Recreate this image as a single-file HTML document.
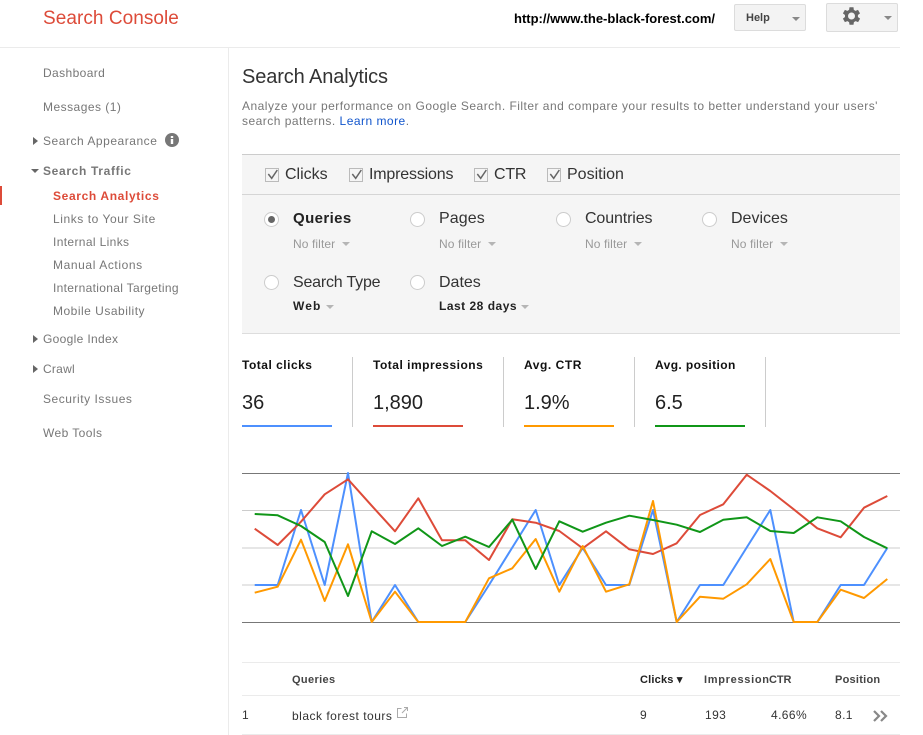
<!DOCTYPE html>
<html><head><meta charset="utf-8"><style>
html,body{margin:0;padding:0;background:#fff;}
body{width:923px;height:735px;overflow:hidden;position:relative;font-family:"Liberation Sans",sans-serif;}
.a{position:absolute;white-space:nowrap;}
.n{font-size:12px;letter-spacing:.5px;color:#777;line-height:14px;}
.f{font-size:16px;color:#333;line-height:18px;}
.s{font-size:12px;color:#999;line-height:14px;}
.w{font-size:12px;font-weight:bold;letter-spacing:.55px;color:#222;line-height:14px;}
.v{font-size:20px;color:#222;line-height:22px;}
.r{position:absolute;width:13px;height:13px;border:1px solid #ccc;border-radius:50%;background:#fff;}
.c{position:absolute;width:12px;height:12px;border:1px solid #bbb;background:#f5f5f5;}
.d{font-size:12px;letter-spacing:.4px;color:#333;line-height:14px;}
.h{font-size:11px;font-weight:bold;letter-spacing:.35px;color:#444;line-height:14px;}
.b{position:absolute;box-sizing:border-box;border:1px solid #dcdcdc;border-radius:2px;background:#f3f3f3;}
</style></head><body>
<div class="a" style="left:43px;top:8px;font-size:19px;letter-spacing:.05px;line-height:22px;color:#dd4b39;">Search Console</div>
<div class="a" style="left:514px;top:12px;font-size:13px;font-weight:bold;color:#000;line-height:14px;">http://www.the-black-forest.com/</div>
<div class="b" style="left:734px;top:4px;width:72px;height:27px;"></div>
<div class="a" style="left:746px;top:11px;font-size:11px;font-weight:bold;color:#444;line-height:14px;">Help</div>
<svg class="a" style="left:792px;top:17px" width="8" height="4"><path d="M0 0h8L4 4z" fill="#888"/></svg>
<div class="b" style="left:826px;top:3px;width:72px;height:29px;"></div>
<svg class="a" style="left:839px;top:4px" width="24" height="24" viewBox="0.500 0 24 24"><path fill="#666" d="M19.4 13a7.5 7.5 0 0 0 0-2l2.1-1.6-2-3.5-2.500 1a7.500 7.500 0 0 0-1.700-1L15 3.200h-4l-.4 2.700a7.500 7.500 0 0 0-1.700 1l-2.500-1-2 3.500L6.500 11a7.500 7.500 0 0 0 0 2l-2.100 1.600 2 3.500 2.500-1a7.500 7.500 0 0 0 1.700 1l.4 2.700h4l.4-2.700a7.500 7.500 0 0 0 1.700-1l2.500 1 2-3.500zM13 15.500a3.500 3.500 0 1 1 0-7 3.500 3.500 0 0 1 0 7z"/></svg>
<svg class="a" style="left:884px;top:16px" width="8" height="4"><path d="M0 0h8L4 4z" fill="#888"/></svg>
<div class="a" style="left:0;top:47px;width:900px;height:1px;background:#ebebeb;"></div>
<div class="a" style="left:228px;top:48px;width:1px;height:687px;background:#ebebeb;"></div>

<div class="a n" style="left:43px;top:66px;letter-spacing:.39px;">Dashboard</div>
<div class="a n" style="left:43px;top:100px;letter-spacing:.47px;">Messages (1)</div>
<svg class="a" style="left:33px;top:137px" width="5" height="8"><path d="M0 0l5 4-5 4z" fill="#666"/></svg>
<div class="a n" style="left:43px;top:134px;letter-spacing:.53px;">Search Appearance</div>
<svg class="a" style="left:165px;top:133px" width="14" height="14"><circle cx="7" cy="7" r="7" fill="#777"/><rect x="5.800" y="6" width="2.400" height="5" fill="#fff"/><rect x="5.800" y="3" width="2.400" height="2" fill="#fff"/></svg>
<svg class="a" style="left:31px;top:169px" width="8" height="5"><path d="M0 0h8L4 4z" fill="#666"/></svg>
<div class="a n" style="left:43px;top:164px;font-weight:bold;letter-spacing:.66px;">Search Traffic</div>
<div class="a" style="left:0;top:186px;width:2px;height:19px;background:#dd4b39;"></div>
<div class="a n" style="left:53px;top:189px;font-weight:bold;color:#dd4b39;letter-spacing:.64px;">Search Analytics</div>
<div class="a n" style="left:53px;top:212px;letter-spacing:.56px;">Links to Your Site</div>
<div class="a n" style="left:53px;top:235px;letter-spacing:.36px;">Internal Links</div>
<div class="a n" style="left:53px;top:258px;letter-spacing:.6px;">Manual Actions</div>
<div class="a n" style="left:53px;top:281px;letter-spacing:.32px;">International Targeting</div>
<div class="a n" style="left:53px;top:304px;letter-spacing:.5px;">Mobile Usability</div>
<svg class="a" style="left:33px;top:335px" width="5" height="8"><path d="M0 0l5 4-5 4z" fill="#666"/></svg>
<div class="a n" style="left:43px;top:332px;letter-spacing:.33px;">Google Index</div>
<svg class="a" style="left:33px;top:365px" width="5" height="8"><path d="M0 0l5 4-5 4z" fill="#666"/></svg>
<div class="a n" style="left:43px;top:362px;letter-spacing:.26px;">Crawl</div>
<div class="a n" style="left:43px;top:392px;letter-spacing:.54px;">Security Issues</div>
<div class="a n" style="left:43px;top:426px;letter-spacing:.42px;">Web Tools</div>

<div class="a" style="left:242px;top:65px;font-size:20px;letter-spacing:-.12px;line-height:24px;color:#333;">Search Analytics</div>
<div class="a" style="left:242px;top:99px;font-size:12px;letter-spacing:.48px;line-height:15px;color:#777;">Analyze your performance on Google Search. Filter and compare your results to better understand your users'<br>search patterns. <span style="color:#15c">Learn more</span>.</div>

<div class="a" style="left:242px;top:154px;width:658px;height:180px;box-sizing:border-box;background:#f5f5f5;border-top:1px solid #ccc;border-bottom:1px solid #ddd;"></div>
<div class="a" style="left:242px;top:194px;width:658px;height:1px;background:#d5d5d5;"></div>
<div class="c" style="left:265px;top:168px;"></div><svg class="a" style="left:265px;top:168px" width="14" height="14"><path d="M3.300 6l3.400 4.300L12.300 2" fill="none" stroke="#666" stroke-width="1.500"/></svg>
<div class="a f" style="left:285px;top:166px;">Clicks</div>
<div class="c" style="left:349px;top:168px;"></div><svg class="a" style="left:349px;top:168px" width="14" height="14"><path d="M3.300 6l3.400 4.300L12.300 2" fill="none" stroke="#666" stroke-width="1.500"/></svg>
<div class="a f" style="left:369px;top:166px;letter-spacing:-.18px;">Impressions</div>
<div class="c" style="left:474px;top:168px;"></div><svg class="a" style="left:474px;top:168px" width="14" height="14"><path d="M3.300 6l3.400 4.300L12.300 2" fill="none" stroke="#666" stroke-width="1.500"/></svg>
<div class="a f" style="left:494px;top:166px;letter-spacing:-.2px;">CTR</div>
<div class="c" style="left:547px;top:168px;"></div><svg class="a" style="left:547px;top:168px" width="14" height="14"><path d="M3.300 6l3.400 4.300L12.300 2" fill="none" stroke="#666" stroke-width="1.500"/></svg>
<div class="a f" style="left:567px;top:166px;">Position</div>

<div class="r" style="left:264px;top:212px;"></div><div class="a" style="left:268px;top:216px;width:7px;height:7px;border-radius:50%;background:#666;"></div>
<div class="a f" style="left:293px;top:210px;font-weight:bold;color:#222;font-size:15px;letter-spacing:.4px;">Queries</div>
<div class="a s" style="left:293px;top:237px;letter-spacing:.1px;">No filter</div><svg class="a" style="left:342px;top:242px" width="8" height="4"><path d="M0 0h8L4 4z" fill="#b5b5b5"/></svg>
<div class="r" style="left:410px;top:212px;"></div>
<div class="a f" style="left:439px;top:210px;letter-spacing:.1px;">Pages</div>
<div class="a s" style="left:439px;top:237px;letter-spacing:.1px;">No filter</div><svg class="a" style="left:488px;top:242px" width="8" height="4"><path d="M0 0h8L4 4z" fill="#b5b5b5"/></svg>
<div class="r" style="left:556px;top:212px;"></div>
<div class="a f" style="left:585px;top:210px;letter-spacing:-.12px;">Countries</div>
<div class="a s" style="left:585px;top:237px;letter-spacing:.1px;">No filter</div><svg class="a" style="left:634px;top:242px" width="8" height="4"><path d="M0 0h8L4 4z" fill="#b5b5b5"/></svg>
<div class="r" style="left:702px;top:212px;"></div>
<div class="a f" style="left:731px;top:210px;">Devices</div>
<div class="a s" style="left:731px;top:237px;letter-spacing:.1px;">No filter</div><svg class="a" style="left:780px;top:242px" width="8" height="4"><path d="M0 0h8L4 4z" fill="#b5b5b5"/></svg>
<div class="r" style="left:264px;top:275px;"></div>
<div class="a f" style="left:293px;top:274px;letter-spacing:-.2px;">Search Type</div>
<div class="a w" style="left:293px;top:299px;letter-spacing:1.1px;">Web</div><svg class="a" style="left:326px;top:305px" width="8" height="4"><path d="M0 0h8L4 4z" fill="#b5b5b5"/></svg>
<div class="r" style="left:410px;top:275px;"></div>
<div class="a f" style="left:439px;top:274px;">Dates</div>
<div class="a w" style="left:439px;top:299px;letter-spacing:.5px;">Last 28 days</div><svg class="a" style="left:521px;top:305px" width="8" height="4"><path d="M0 0h8L4 4z" fill="#b5b5b5"/></svg>

<div class="a w" style="left:242px;top:358px;color:#111;letter-spacing:.5px;">Total clicks</div>
<div class="a v" style="left:242px;top:392px;">36</div>
<div class="a" style="left:242px;top:425px;width:90px;height:2px;background:#4d90fe;"></div>
<div class="a" style="left:352px;top:357px;width:1px;height:70px;background:#ccc;"></div>
<div class="a w" style="left:373px;top:358px;color:#111;letter-spacing:.5px;">Total impressions</div>
<div class="a v" style="left:373px;top:392px;">1,890</div>
<div class="a" style="left:373px;top:425px;width:90px;height:2px;background:#dd4b39;"></div>
<div class="a" style="left:503px;top:357px;width:1px;height:70px;background:#ccc;"></div>
<div class="a w" style="left:524px;top:358px;color:#111;">Avg. CTR</div>
<div class="a v" style="left:524px;top:392px;">1.9%</div>
<div class="a" style="left:524px;top:425px;width:90px;height:2px;background:#ff9900;"></div>
<div class="a" style="left:634px;top:357px;width:1px;height:70px;background:#ccc;"></div>
<div class="a w" style="left:655px;top:358px;color:#111;letter-spacing:.4px;">Avg. position</div>
<div class="a v" style="left:655px;top:392px;">6.5</div>
<div class="a" style="left:655px;top:425px;width:90px;height:2px;background:#109618;"></div>
<div class="a" style="left:765px;top:357px;width:1px;height:70px;background:#ccc;"></div>

<svg class="a" style="left:0;top:0" width="923" height="735" fill="none" stroke-linejoin="round">
<path d="M242 473.500H900M242 622.500H900" stroke="#777"/>
<path d="M242 510.500H900M242 548H900M242 585H900" stroke="#ccc"/>
<polyline stroke="#4d90fe" stroke-width="2" points="254.700,585 277.700,585 301,510 324.700,585 348,473 371.700,622 395,585 418.300,622 442,622 465.300,622 489,585 512.300,547.500 535.700,510 559.300,585 582.700,548 606,585 629.300,585 653,510 676.700,622 700,585 723.300,585 746.700,547.500 770.300,510 793.700,622 817.300,622 840.700,585 864,585 887.300,548"/>
<polyline stroke="#dd4b39" stroke-width="2" points="254.700,528.700 277.700,545 301,521.700 324.700,494.300 348,479.300 371.700,505.700 395,531.300 418.300,498.300 442,540.300 465.300,540.300 489,560 512.300,519.300 535.700,522.700 559.300,531 582.700,548.300 606,531.300 629.300,549.300 653,554 676.700,543.300 700,515 723.300,504.300 746.700,474.700 770.300,491 793.700,509.300 817.300,528.300 840.700,537.300 864,507.700 887.300,496"/>
<polyline stroke="#ff9900" stroke-width="2" points="254.700,592.700 277.700,586.700 301,539.700 324.700,601 348,544.300 371.700,622 395,591.700 418.300,622 442,622 465.300,622 489,578.300 512.300,568.300 535.700,539 559.300,591.700 582.700,546 606,591.700 629.300,584.300 653,501 676.700,622 700,596.700 723.300,598.700 746.700,584.300 770.300,559 793.700,622 817.300,622 840.700,589.700 864,598 887.300,579"/>
<polyline stroke="#109618" stroke-width="2" points="254.700,514 277.700,515.300 301,526 324.700,542 348,596 371.700,531.300 395,544 418.300,528.300 442,546 465.300,536.700 489,547 512.300,519.700 535.700,569 559.300,521.300 582.700,531.700 606,522.700 629.300,515.700 653,520 676.700,524.700 700,532 723.300,519.700 746.700,517.300 770.300,531 793.700,533 817.300,517.300 840.700,521.300 864,537 887.300,548.300"/>
</svg>

<div class="a" style="left:242px;top:662px;width:658px;height:1px;background:#ebebeb;"></div>
<div class="a" style="left:242px;top:695px;width:658px;height:1px;background:#ebebeb;"></div>
<div class="a" style="left:242px;top:734px;width:658px;height:1px;background:#ebebeb;"></div>
<div class="a h" style="left:292px;top:673px;">Queries</div>
<div class="a h" style="left:640px;top:673px;color:#222;letter-spacing:.2px;">Clicks ▾</div>
<div class="a h" style="left:704px;top:673px;letter-spacing:.7px;">Impression</div>
<div class="a h" style="left:769px;top:673px;letter-spacing:-.1px;">CTR</div>
<div class="a h" style="left:835px;top:673px;letter-spacing:.25px;">Position</div>
<div class="a d" style="left:242px;top:708px;">1</div>
<div class="a d" style="left:292px;top:709px;letter-spacing:.5px;">black forest tours</div>
<svg class="a" style="left:397px;top:707px" width="11" height="11" fill="none" stroke="#aaa"><path d="M4.500 1.500H.5v9h9v-4"/><path d="M5 6l5-5M7 .5h3.500V4"/></svg>
<div class="a d" style="left:640px;top:708px;">9</div>
<div class="a d" style="left:705px;top:708px;">193</div>
<div class="a d" style="left:771px;top:708px;">4.66%</div>
<div class="a d" style="left:835px;top:708px;">8.1</div>
<svg class="a" style="left:873px;top:710px" width="15" height="12" fill="none" stroke="#888" stroke-width="2.200"><path d="M1 1l5 5-5 5M8 1l5 5-5 5"/></svg>
</body></html>
